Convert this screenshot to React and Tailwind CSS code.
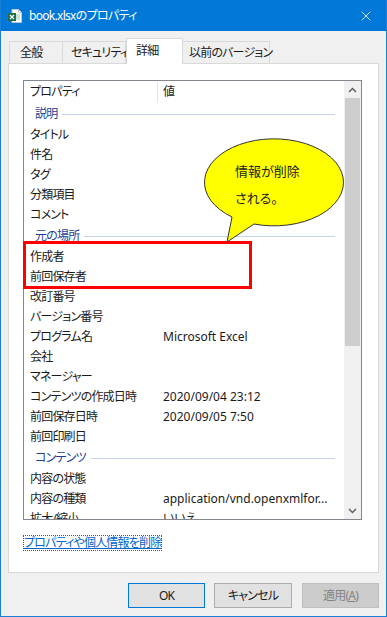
import { X } from 'lucide-react';

const font = { fontFamily: '"Noto Sans", "Noto Sans CJK JP", sans-serif' };

const sections = [
  {
    title: '説明',
    rows: [['タイトル'], ['件名'], ['タグ'], ['分類項目'], ['コメント']],
  },
  {
    title: '元の場所',
    rows: [
      ['作成者'],
      ['前回保存者'],
      ['改訂番号'],
      ['バージョン番号'],
      ['プログラム名', 'Microsoft Excel'],
      ['会社'],
      ['マネージャー'],
      ['コンテンツの作成日時', '2020/09/04 23:12'],
      ['前回保存日時', '2020/09/05 7:50'],
      ['前回印刷日'],
    ],
  },
  {
    title: 'コンテンツ',
    rows: [
      ['内容の状態'],
      ['内容の種類', 'application/vnd.openxmlfor...'],
      ['拡大/縮小', 'いいえ'],
      ['ドキュメントの共有', 'いいえ'],
    ],
  },
];

const ExcelIcon = () => (
  <svg width="16" height="16" viewBox="0 0 16 16">
    <path d="M5 1.5h6.5l3 3v10H5z" fill="#fff" stroke="#c8c8c8" strokeWidth="1" />
    <path d="M11.5 1.5v3h3" fill="none" stroke="#c8c8c8" strokeWidth="1" />
    <path d="M9 7h4M9 9h4M9 11h4" stroke="#8fc7a3" strokeWidth="1" />
    <rect x="1" y="5" width="8" height="8" fill="#1e7145" />
    <path d="M3 7l4 4M7 7l-4 4" stroke="#fff" strokeWidth="1.2" />
  </svg>
);

const Row = ({ label, value }) => (
  <div className="flex h-5 items-center whitespace-nowrap text-[12px] text-[#1a1a1a]">
    <div className="w-[139px] shrink-0 pl-[6px]">{label}</div>
    <div className="tracking-normal">{value}</div>
  </div>
);

const Group = ({ title }) => (
  <div className="flex h-[22px] items-center pl-[11px] pr-[9px] text-[12px] text-[#1c3f94]">
    <span>{title}</span>
    <div className="ml-[5px] h-px flex-1 bg-[#c9d3ea]" />
  </div>
);

export default function App() {
  return (
    <div
      className="relative flex h-[617px] w-[387px] flex-col overflow-hidden border-x border-b border-[#1a7fd6] bg-[#f0f0f0] tracking-[-0.8px] [font-feature-settings:'palt']"
      style={font}
    >
      <div className="flex h-[31px] shrink-0 items-center bg-[#0078d7] pl-[6px] pr-[12px] text-white">
        <ExcelIcon />
        <span className="ml-[6px] text-[12px] tracking-[-0.7px]">book.xlsxのプロパティ</span>
        <X className="ml-auto" size={16} strokeWidth={1.2} />
      </div>

      <div className="ml-[8px] mt-[7px] flex items-end whitespace-nowrap text-[12px] text-[#1a1a1a]">
        <div className="flex h-[22px] w-[54px] items-center border border-b-0 border-[#d9d9d9] pl-[10px]">全般</div>
        <div className="flex h-[22px] w-[63px] items-center border border-b-0 border-l-0 border-[#d9d9d9] pl-[8px]">セキュリティ</div>
        <div className="relative z-10 -mb-px flex h-[26px] w-[57px] items-center border border-b-0 border-[#d9d9d9] bg-white pb-[2px] pl-[9px]">詳細</div>
        <div className="flex h-[22px] w-[87px] items-center border border-b-0 border-l-0 border-[#d9d9d9] pl-[6px]">以前のバージョン</div>
      </div>

      <div className="ml-[7px] flex h-[510px] w-[371px] flex-col border border-[#d9d9d9] bg-white pl-[14px] pt-[16px]">
        <div className="flex h-[440px] w-[339px] border border-[#828790]">
          <div className="flex-1 overflow-hidden">
            <div className="relative flex h-[22px] items-center text-[12px] text-[#1a1a1a]">
              <div className="w-[133px] shrink-0 pl-[6px]">プロパティ</div>
              <div className="h-[21px] w-px bg-[#e5e5e5]" />
              <div className="pl-[5px]">値</div>
            </div>
            {sections.map((s) => (
              <div key={s.title}>
                <Group title={s.title} />
                {s.rows.map(([l, v]) => (
                  <Row key={l} label={l} value={v} />
                ))}
              </div>
            ))}
          </div>
          <div className="flex w-[17px] shrink-0 flex-col bg-[#f0f0f0]">
            <div className="flex h-[17px] items-center justify-center">
              <svg width="9" height="6" viewBox="0 0 9 6">
                <path d="M1 5l3.5-3.5L8 5" fill="none" stroke="#606060" strokeWidth="1.5" />
              </svg>
            </div>
            <div className="mx-[1px] h-[248px] bg-[#cdcdcd]" />
            <div className="mt-auto flex h-[17px] items-center justify-center">
              <svg width="9" height="6" viewBox="0 0 9 6">
                <path d="M1 1l3.5 3.5L8 1" fill="none" stroke="#606060" strokeWidth="1.5" />
              </svg>
            </div>
          </div>
        </div>
        <div className="mt-[15px] flex">
          <span className="inline-block border border-dotted border-[#555] text-[12px] leading-[14px] text-[#0066cc] underline">
            プロパティや個人情報を削除
          </span>
        </div>
      </div>

      <div className="ml-[127px] mt-[10px] flex gap-[9px] text-[12px]">
        <button className="h-[25px] w-[77px] border border-[#0078d7] bg-[#e1e1e1] text-[#1a1a1a]">OK</button>
        <button className="h-[25px] w-[78px] border border-[#adadad] bg-[#e1e1e1] text-[#1a1a1a]">キャンセル</button>
        <button className="ml-px h-[25px] w-[77px] border border-[#bfbfbf] bg-[#cccccc] text-[#838383]">
          適用(<span className="underline">A</span>)
        </button>
      </div>

      <div className="absolute left-[22px] top-[241px] h-[48px] w-[229px] border-[3px] border-[#ff0000]" />

      <svg className="absolute left-[200px] top-[138px]" width="146" height="108" viewBox="0 0 146 108">
        <path
          d="M31 79 A69.5 43.5 0 1 1 53 86 L26 104 Z"
          fill="#ffff00"
          stroke="#333"
          strokeWidth="1"
        />
      </svg>
      <div className="absolute left-[234px] top-[158px] text-[13px] leading-[27px] tracking-normal text-[#222]">
        <div>情報が削除</div>
        <div>される。</div>
      </div>
    </div>
  );
}
